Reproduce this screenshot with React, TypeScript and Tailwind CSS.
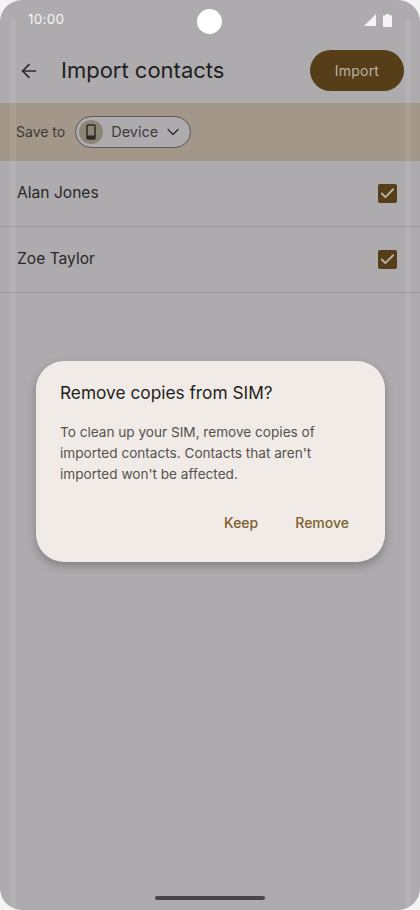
import { ArrowLeft, ChevronDown, Check } from "lucide-react";

const contacts = ["Alan Jones", "Zoe Taylor"];

const ContactRow = ({ name }: { name: string }) => {
  return (
    <li className="flex h-[66px] items-center justify-between border-b border-[#9b999b] pl-[17px] pr-[23px]">
      <span className="pb-[1px] text-[15.6px] text-[#29282a]">{name}</span>
      <span className="mb-[1px] flex h-[19px] w-[19px] items-center justify-center rounded-[2px] bg-[#553e18]">
        <Check size={17} strokeWidth={2.6} className="text-[#b9b3a8]" />
      </span>
    </li>
  );
};

const DeviceIcon = () => (
  <svg width="14" height="16" viewBox="0 0 14 16" fill="none">
    <rect x="3" y="1" width="8" height="14" rx="1" stroke="#2b2a28" strokeWidth="1.5" />
    <rect x="3" y="11.5" width="8" height="3.5" fill="#2b2a28" />
  </svg>
);

export default function App() {
  return (
    <div className="relative h-[910px] w-[420px] overflow-hidden bg-[#f4f3f4] font-['Inter',sans-serif]">
      <div className="relative flex h-full flex-col overflow-hidden rounded-[22px] bg-[#adabad]">
        {/* status bar */}
        <div className="flex h-[40px] shrink-0 items-center justify-between pl-[28px] pr-[28px]">
          <span className="pb-[1px] text-[13.5px] tracking-[0.3px] text-[#f5f5f5]">10:00</span>
          <div className="flex items-center gap-[7px]">
            <svg width="12" height="12" viewBox="0 0 12 12">
              <path d="M12 0V12H0Z" fill="#f5f5f5" />
            </svg>
            <svg width="9" height="13" viewBox="0 0 9 13">
              <path d="M3 0H6V1.2H8C8.5 1.2 9 1.6 9 2.2V12C9 12.6 8.5 13 8 13H1C.5 13 0 12.6 0 12V2.2C0 1.6.5 1.2 1 1.2H3Z" fill="#f5f5f5" />
            </svg>
          </div>
        </div>

        {/* toolbar */}
        <div className="flex h-[63px] shrink-0 items-center pb-[2px] pl-[18px] pr-[16px]">
          <ArrowLeft size={22} strokeWidth={1.9} className="text-[#2d2c2e]" />
          <h1 className="ml-[21px] flex-1 text-[22px] text-[#201f21]">Import contacts</h1>
          <button className="h-[41px] w-[94px] rounded-full bg-[#553e18] pb-[1px] text-[14px] font-normal tracking-[0.2px] text-[#b9b2a5]">
            Import
          </button>
        </div>

        {/* save to */}
        <div className="flex h-[58px] shrink-0 items-center gap-[10px] bg-[#a29789] pl-[16px]">
          <span className="pb-[2px] text-[14px] text-[#3e3b37]">Save to</span>
          <div className="flex h-[32px] w-[116px] items-center rounded-full border border-[#5a5854] bg-[#adabad] pl-[3px]">
            <span className="flex h-[24px] w-[24px] items-center justify-center rounded-full bg-[#8d8574]">
              <DeviceIcon />
            </span>
            <span className="ml-[8px] pb-[1px] text-[14.5px] text-[#3e3d3d]">Device</span>
            <ChevronDown size={20} strokeWidth={1.6} className="ml-[5px] text-[#2f2e2e]" />
          </div>
        </div>

        <ul className="shrink-0">
          {contacts.map((c) => (
            <ContactRow name={c} key={c} />
          ))}
        </ul>

        {/* home indicator */}
        <div className="mt-auto flex justify-center pb-[10px]">
          <div className="h-[4px] w-[110px] rounded-full bg-[#464547]" />
        </div>

        {/* curved edge highlights */}
        <div className="absolute bottom-0 left-[10px] top-[20px] w-[6px] bg-white/[0.07]" />
        <div className="absolute bottom-0 right-[9px] top-[20px] w-[6px] bg-white/[0.07]" />

        {/* hole punch */}
        <div className="absolute left-[197px] top-[9px] h-[25px] w-[25px] rounded-full bg-white" />

        {/* dialog */}
        <div className="absolute left-[36px] top-[361px] h-[201px] w-[349px] rounded-[28px] bg-[#f0ebe6] px-[24px] pt-[20px] shadow-[0_4px_10px_rgba(0,0,0,0.25)]">
          <h2 className="text-[17.3px] leading-[24px] text-[#1f1e1c]">Remove copies from SIM?</h2>
          <p className="mt-[17px] text-[13.6px] leading-[21px] text-[#55524e]">
            To clean up your SIM, remove copies of imported contacts. Contacts that aren't imported won't be affected.
          </p>
          <div className="mt-[27px] flex justify-end gap-[37px] pr-[12px] text-[14px] font-medium text-[#7d5f2e]">
            <button>Keep</button>
            <button>Remove</button>
          </div>
        </div>
      </div>
    </div>
  );
}
